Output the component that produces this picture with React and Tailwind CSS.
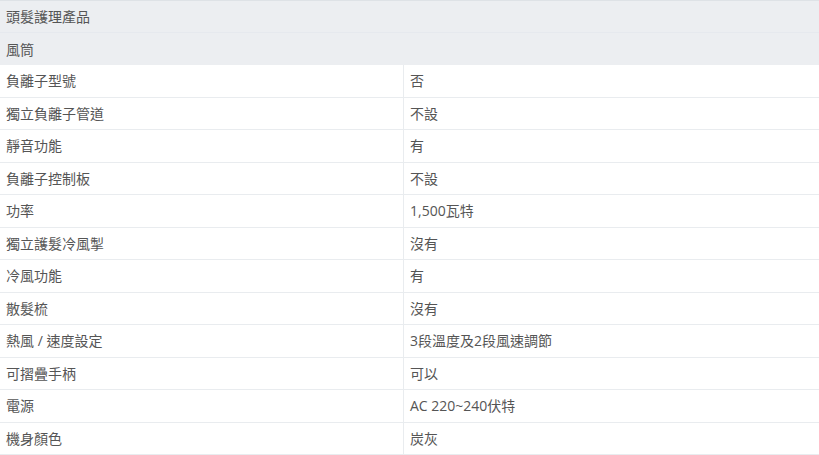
export default function App() {
  const specs = [
    ["負離子型號", "否"],
    ["獨立負離子管道", "不設"],
    ["靜音功能", "有"],
    ["負離子控制板", "不設"],
    ["功率", "1,500瓦特"],
    ["獨立護髮冷風掣", "沒有"],
    ["冷風功能", "有"],
    ["散髮梳", "沒有"],
    ["熱風 / 速度設定", "3段溫度及2段風速調節"],
    ["可摺疊手柄", "可以"],
    ["電源", "AC 220~240伏特"],
    ["機身顏色", "炭灰"],
  ];

  return (
    <div
      className="w-[819px] h-[455px] bg-white text-[14px] text-[#555] overflow-hidden"
      style={{ fontFamily: '"Open Sans", "Noto Sans CJK TC", sans-serif' }}
    >
      <div className="border-t border-[#dee2e6]">
        <div className="h-[32px] flex items-center px-[6px] bg-[#eceef1] border-b border-[#e6e9ee]">
          頭髮護理產品
        </div>
        <div className="h-[32px] flex items-center px-[6px] bg-[#eceef1]">
          風筒
        </div>
        {specs.map(([label, value]) => (
          <div key={label} className="h-[32.5px] flex border-b border-[#e9ecef]">
            <div className="w-[404px] flex items-center px-[6px] border-r border-[#e9ecef]">
              {label}
            </div>
            <div className="flex-1 flex items-center px-[6px]">{value}</div>
          </div>
        ))}
      </div>
    </div>
  );
}
